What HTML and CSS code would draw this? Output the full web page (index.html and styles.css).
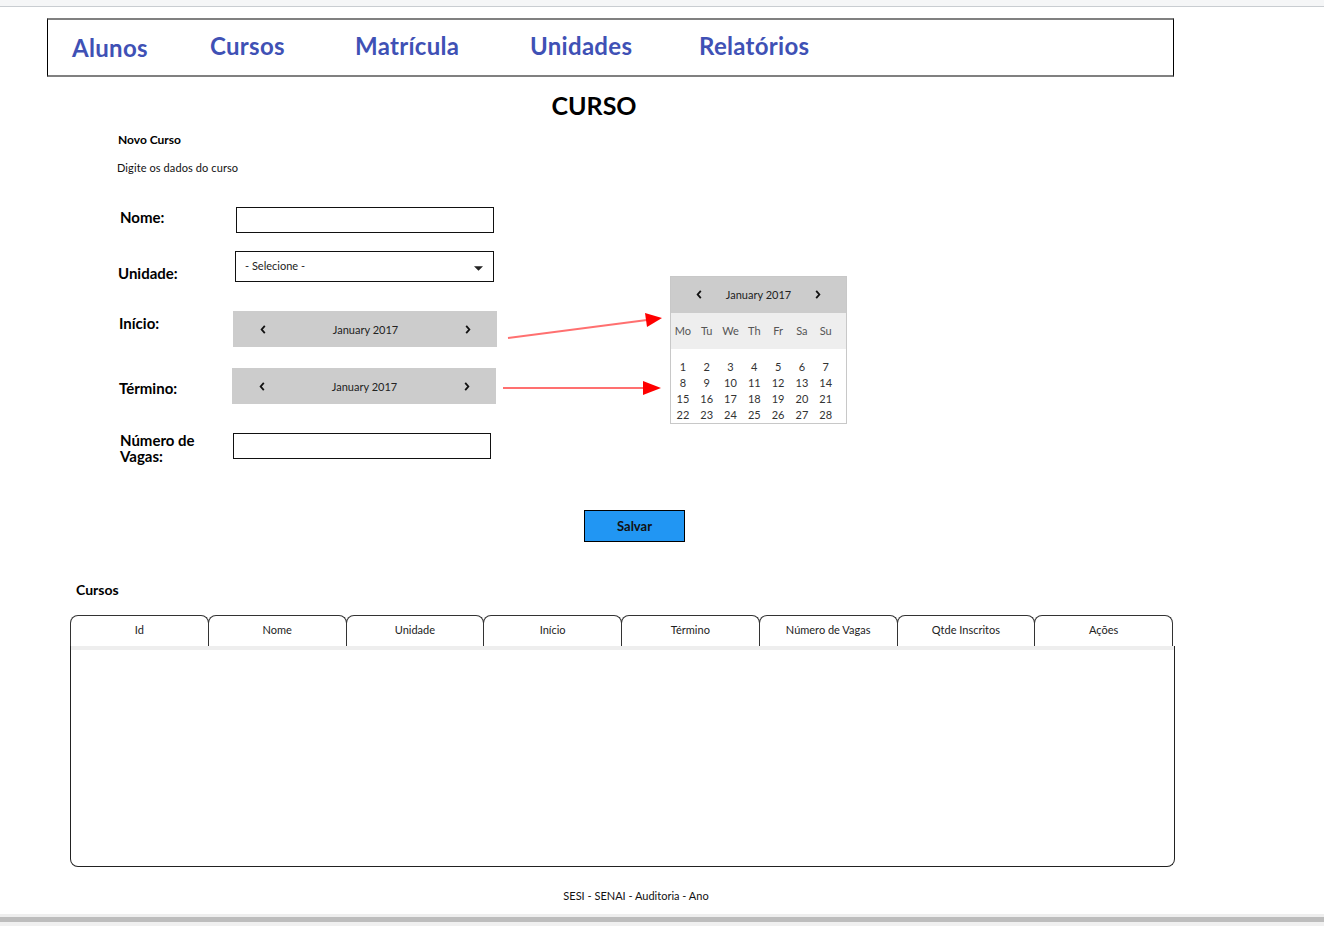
FILE: index.html
```html
<!DOCTYPE html>
<html lang="pt-BR">
<head>
    <meta charset="UTF-8">
    <meta name="viewport" content="width=device-width, initial-scale=1.0">
    <title>Curso</title>
    <link rel="stylesheet" href="styles.css">
</head>
<body>
    <div class="toolbar"></div>

    <nav class="menu">
        <ul>
            <li class="menu-first"><a href="#">Alunos</a></li>
            <li><a href="#">Cursos</a></li>
            <li><a href="#">Matrícula</a></li>
            <li><a href="#">Unidades</a></li>
            <li><a href="#">Relatórios</a></li>
        </ul>
    </nav>

    <h1 class="title">CURSO</h1>

    <div class="form-wrap">
        <div class="form">
            <p class="form-name">Novo Curso</p>
            <p class="form-desc">Digite os dados do curso</p>

            <div class="row row-nome">
                <label class="row-label">Nome:</label>
                <input type="text" class="field field-text">
            </div>

            <div class="row row-unidade">
                <label class="row-label">Unidade:</label>
                <div class="field field-select">
                    <span>- Selecione -</span>
                    <svg class="caret" viewBox="0 0 10 5"><path d="M0 0 L10 0 L5 5 Z"/></svg>
                </div>
            </div>

            <div class="row row-inicio">
                <label class="row-label">Início:</label>
                <div class="field datebar">
                    <svg class="chev" viewBox="0 0 6 10"><path d="M5 1 L1.5 5 L5 9"/></svg>
                    <span>January 2017</span>
                    <svg class="chev" viewBox="0 0 6 10"><path d="M1 1 L4.5 5 L1 9"/></svg>
                </div>
            </div>

            <div class="row row-termino">
                <label class="row-label">Término:</label>
                <div class="field datebar">
                    <svg class="chev" viewBox="0 0 6 10"><path d="M5 1 L1.5 5 L5 9"/></svg>
                    <span>January 2017</span>
                    <svg class="chev" viewBox="0 0 6 10"><path d="M1 1 L4.5 5 L1 9"/></svg>
                </div>
            </div>

            <div class="row row-vagas">
                <label class="row-label">Número de Vagas:</label>
                <input type="text" class="field field-text">
            </div>
        </div>

        <div class="calendar">
            <div class="cal-head">
                <svg class="chev" viewBox="0 0 6 10"><path d="M5 1 L1.5 5 L5 9"/></svg>
                <span>January 2017</span>
                <svg class="chev" viewBox="0 0 6 10"><path d="M1 1 L4.5 5 L1 9"/></svg>
            </div>
            <div class="cal-week">
                <span>Mo</span><span>Tu</span><span>We</span><span>Th</span><span>Fr</span><span>Sa</span><span>Su</span>
            </div>
            <div class="cal-days">
                <span>1</span><span>2</span><span>3</span><span>4</span><span>5</span><span>6</span><span>7</span>
                <span>8</span><span>9</span><span>10</span><span>11</span><span>12</span><span>13</span><span>14</span>
                <span>15</span><span>16</span><span>17</span><span>18</span><span>19</span><span>20</span><span>21</span>
                <span>22</span><span>23</span><span>24</span><span>25</span><span>26</span><span>27</span><span>28</span>
            </div>
        </div>

        <!-- setas que ligam os campos de data ao calendario -->
        <svg class="arrows" width="1324" height="340">
            <line x1="508" y1="206" x2="647" y2="188" class="arrow-line"/>
            <polygon points="662,186 645,181 647,195" class="arrow-head"/>
            <line x1="503" y1="256" x2="645" y2="256" class="arrow-line"/>
            <polygon points="661,256 643,249 643,263" class="arrow-head"/>
        </svg>
    </div>

    <button class="save">Salvar</button>

    <h2 class="list-title">Cursos</h2>

    <div class="grid-head">
        <div class="tab">Id</div>
        <div class="tab">Nome</div>
        <div class="tab">Unidade</div>
        <div class="tab">Início</div>
        <div class="tab">Término</div>
        <div class="tab">Número de Vagas</div>
        <div class="tab">Qtde Inscritos</div>
        <div class="tab">Ações</div>
    </div>
    <div class="grid-body">
        <div class="band"></div>
    </div>

    <footer class="footer">SESI - SENAI - Auditoria - Ano</footer>

    <div class="scrollbar"></div>
</body>
</html>
```

FILE: styles.css
```css
* {
    box-sizing: border-box;
}

body {
    margin: 0;
    font-family: Lato, "Liberation Sans", sans-serif;
    color: #111;
    background: #fff;
}

.toolbar {
    height: 7px;
    background: #f5f6f7;
    border-bottom: 1px solid #c9cdd1;
}

/* menu */
.menu {
    margin: 11px 0 0 47px;
    width: 1127px;
    height: 59px;
    border-top: 2px solid #808080;
    border-bottom: 2px solid #808080;
    border-left: 1px solid #000;
    border-right: 1px solid #000;
}

.menu ul {
    display: grid;
    grid-template-columns: 138px 145px 175px 169px auto;
    align-items: center;
    height: 100%;
    margin: 0;
    padding: 0 0 4px 24px;
    list-style: none;
}

.menu a {
    text-decoration: none;
    color: #3f51b5;
    font-size: 24px;
    font-weight: bold;
    line-height: 30px;
    letter-spacing: 0.3px;
}

.menu-first {
    padding-top: 4px;
}

.title {
    margin: 12px 0 0;
    width: 1188px;
    text-align: center;
    font-size: 25px;
    line-height: 32px;
    font-weight: bold;
    color: #000;
}

/* formulario */
.form-wrap {
    position: relative;
    display: flex;
    align-items: flex-start;
    margin-top: 11px;
    padding-left: 117px;
}

.form {
    width: 380px;
}

.form-name {
    margin: 0 0 0 1px;
    font-size: 12px;
    font-weight: bold;
    line-height: 15px;
    color: #000;
}

.form-desc {
    margin: 13px 0 0;
    font-size: 11px;
    line-height: 15px;
    letter-spacing: 0.1px;
}

.row {
    display: flex;
    align-items: flex-start;
}

.row-label {
    width: 116px;
    flex-shrink: 0;
    font-size: 15px;
    font-weight: bold;
    line-height: 18px;
    color: #000;
}

.field {
    height: 26px;
    width: 258px;
    margin: 0;
    border: 1px solid #111;
    background: #fff;
    font-family: inherit;
}

.row-nome { margin-top: 32px; }
.row-nome .row-label { padding: 1px 0 0 3px; }
.row-nome .field { margin-left: 3px; }

.row-unidade { margin-top: 18px; }
.row-unidade .row-label { padding: 13px 0 0 1px; }

.field-select {
    display: flex;
    align-items: center;
    justify-content: space-between;
    width: 259px;
    height: 31px;
    margin-left: 2px;
    padding: 0 10px 2px 9px;
    font-size: 11px;
    color: #222;
}

.caret {
    width: 9px;
    height: 5px;
    margin-top: 5px;
    fill: #222;
}

.datebar {
    display: flex;
    align-items: center;
    justify-content: space-between;
    width: 264px;
    height: 36px;
    padding: 0 26px 0 27px;
    border: none;
    background: #cccccc;
    font-size: 11px;
    color: #222;
}

.chev {
    width: 6px;
    height: 9px;
    fill: none;
    stroke: #111;
    stroke-width: 2;
}

.row-inicio { margin-top: 29px; }
.row-inicio .row-label { padding: 3px 0 0 2px; }

.row-termino { margin-top: 21px; }
.row-termino .row-label { padding: 11px 0 0 2px; }
.row-termino .datebar { margin-left: -1px; }

.row-vagas { margin-top: 29px; }
.row-vagas .row-label {
    margin-top: -1px;
    padding-left: 3px;
    padding-right: 20px;
    line-height: 16px;
}

/* calendario */
.calendar {
    width: 177px;
    margin: 144px 0 0 173px;
    border: 1px solid #c8c8c8;
    font-size: 11px;
}

.cal-head {
    display: flex;
    align-items: center;
    justify-content: center;
    gap: 24px;
    height: 36px;
    padding-bottom: 1px;
    background: #cccccc;
    color: #222;
}

.cal-week,
.cal-days {
    display: grid;
    grid-template-columns: repeat(7, 23.8px);
    text-align: center;
}

.cal-week {
    height: 36px;
    align-items: center;
    padding-bottom: 1px;
    background: #eeeeee;
    color: #555;
}

.cal-days {
    padding-top: 10px;
    line-height: 16px;
    color: #333;
}

.arrows {
    position: absolute;
    top: 0;
    left: 0;
    pointer-events: none;
}

.arrow-line {
    stroke: #ff7070;
    stroke-width: 2;
}

.arrow-head {
    fill: #ff0000;
}

.save {
    display: block;
    margin: 46px 0 0 584px;
    width: 101px;
    height: 32px;
    background: #2196f3;
    border: 1px solid #000;
    font-family: inherit;
    font-size: 13px;
    font-weight: bold;
    color: #111;
}

/* lista */
.list-title {
    margin: 39px 0 0 76px;
    font-size: 14px;
    line-height: 18px;
    font-weight: bold;
    color: #000;
}

.grid-head {
    display: flex;
    width: 1103px;
    margin: 16px 0 0 70px;
}

.tab {
    flex: 1;
    display: flex;
    align-items: center;
    justify-content: center;
    height: 31px;
    margin-left: -1px;
    padding-bottom: 4px;
    border: 1px solid #333;
    border-bottom: none;
    border-radius: 8px 8px 0 0;
    font-size: 11px;
    color: #222;
}

.tab:first-child {
    margin-left: 0;
}

.grid-body {
    width: 1105px;
    height: 221px;
    margin-left: 70px;
    border: 1px solid #222;
    border-top: none;
    border-radius: 0 0 8px 8px;
}

.band {
    height: 4px;
    background: #eeeeee;
}

.footer {
    width: 1272px;
    margin-top: 22px;
    text-align: center;
    font-size: 11px;
    line-height: 14px;
}

.scrollbar {
    height: 12px;
    margin-top: 11px;
    background: #bdbdbd;
    border-top: 3px solid #eeeeee;
    border-bottom: 4px solid #f0f0f0;
}
```
